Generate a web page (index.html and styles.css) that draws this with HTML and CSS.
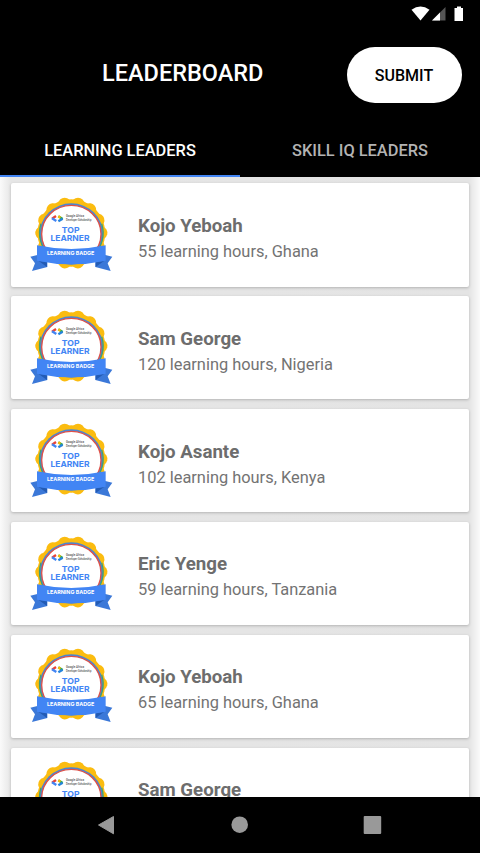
FILE: index.html
```html
<!DOCTYPE html>
<html lang="en">
<head>
<meta charset="utf-8">
<title>Leaderboard</title>
<link rel="stylesheet" href="styles.css">
</head>
<body>
<svg class="defs" aria-hidden="true">
  <symbol id="badge" viewBox="0 0 300 270">
    <g fill="#fbbc10">
      <circle cx="154" cy="129" r="101.500"/>
      <g id="bumps">
        <g id="pair"><circle cx="134" cy="42.500" r="19.500"/><circle cx="174" cy="42.500" r="19.500"/></g>
        <use href="#pair" transform="rotate(51.430 154 129)"/>
        <use href="#pair" transform="rotate(102.860 154 129)"/>
        <use href="#pair" transform="rotate(154.290 154 129)"/>
        <use href="#pair" transform="rotate(205.710 154 129)"/>
        <use href="#pair" transform="rotate(257.140 154 129)"/>
        <use href="#pair" transform="rotate(308.570 154 129)"/>
      </g>
    </g>
    <ellipse cx="154" cy="132" rx="95" ry="92" fill="#4a86d4"/>
    <path d="M63 101A94 92 0 0 0 88 196M245 101A94 92 0 0 1 220 196" fill="none" stroke="#3f9f78" stroke-width="4"/>
    <ellipse cx="154" cy="132" rx="89" ry="86" fill="#fff" stroke="#df5148" stroke-width="4"/>
    <g fill="none" stroke-width="7">
      <path d="M108 78L96 86" stroke="#ea4335"/>
      <path d="M96 85L109 93" stroke="#4285f4"/>
      <path d="M115 79L128 87" stroke="#34a853"/>
      <path d="M128 86L115 94" stroke="#2684dc"/>
      <path d="M115 79L121 83" stroke="#fbbc04"/>
    </g>
    <g class="badge-small"><text x="138" y="81" textLength="54" lengthAdjust="spacingAndGlyphs">Google Africa</text><text x="138" y="93" textLength="76" lengthAdjust="spacingAndGlyphs">Developer Scholarship</text></g>
    <g class="badge-title"><text x="152" y="130" textLength="53" lengthAdjust="spacingAndGlyphs">TOP</text><text x="150" y="153" textLength="117" lengthAdjust="spacingAndGlyphs">LEARNER</text></g>
    <path d="M52 195L31 200L45 220L36 243L82 231V205ZM256 195L277 200L263 220L272 243L226 231V205Z" fill="#3b78d8"/>
    <path d="M81 231V217L55 212ZM227 231V217L253 212Z" fill="#235bb4"/>
    <path d="M51 166Q154 188 257 166V212Q154 234 51 212Z" fill="#4285f4"/>
    <text class="badge-ribbon" x="152" y="195" textLength="142" lengthAdjust="spacingAndGlyphs">LEARNING BADGE</text>
  </symbol>
</svg>
<div class="screen">
  <header class="app-header">
    <div class="status">
      <svg width="54" height="16" viewBox="0 0 54 16">
        <path d="M0.500 3.800Q9.500-2.800 18.500 3.800L9.500 14.500Z" fill="#fff"/>
        <path d="M21 14.500L34.500 1V14.500Z" fill="#555"/>
        <path d="M21 14.500L29 6.500V14.500Z" fill="#fff"/>
        <path d="M43.500 2H46V0.500H50V2H52V15H43.500Z" fill="#fff"/>
      </svg>
    </div>
    <div class="toolbar">
      <h1>LEADERBOARD</h1>
      <button class="submit">SUBMIT</button>
    </div>
    <nav class="tabs">
      <div class="tab active"><span>LEARNING LEADERS</span></div>
      <div class="tab"><span>SKILL IQ LEADERS</span></div>
    </nav>
  </header>
  <main class="list">
    <article class="card"><svg class="badge"><use href="#badge"/></svg><div class="info"><h2>Kojo Yeboah</h2><p>55 learning hours, Ghana</p></div></article>
    <article class="card"><svg class="badge"><use href="#badge"/></svg><div class="info"><h2>Sam George</h2><p>120 learning hours, Nigeria</p></div></article>
    <article class="card"><svg class="badge"><use href="#badge"/></svg><div class="info"><h2>Kojo Asante</h2><p>102 learning hours, Kenya</p></div></article>
    <article class="card"><svg class="badge"><use href="#badge"/></svg><div class="info"><h2>Eric Yenge</h2><p>59 learning hours, Tanzania</p></div></article>
    <article class="card"><svg class="badge"><use href="#badge"/></svg><div class="info"><h2>Kojo Yeboah</h2><p>65 learning hours, Ghana</p></div></article>
    <article class="card"><svg class="badge"><use href="#badge"/></svg><div class="info"><h2>Sam George</h2></div></article>
  </main>
  <footer class="navbar">
    <svg width="480" height="56" viewBox="0 0 480 56" fill="#999">
      <path d="M98.500 28L113.500 19.500V36.800Z" stroke="#999" stroke-linejoin="round"/>
      <circle cx="239.700" cy="27.700" r="8.300"/>
      <rect x="363.700" y="19" width="17.500" height="18" rx="1"/>
    </svg>
  </footer>
</div>
</body>
</html>
```

FILE: styles.css
```css
* { box-sizing: border-box; }
body { margin: 0; font-family: Roboto, sans-serif; }
h1, h2, p { margin: 0; }
.defs { position: absolute; width: 0; height: 0; }
.screen { width: 480px; height: 853px; display: flex; flex-direction: column; overflow: hidden; background: #fff; }
.app-header { flex: 0 0 177.400px; background: #000; color: #fff; }
.status { height: 28px; display: flex; justify-content: flex-end; padding: 6px 15px 0 0; }
.toolbar { height: 93px; display: flex; align-items: center; justify-content: space-between; padding: 0 18.500px 0 102px; }
h1 { font-size: 23.500px; font-weight: 500; line-height: 30px; margin-top: -4px; }
.submit { width: 115px; height: 56px; border: 0; border-radius: 28px; background: #fff; color: #000; font: 500 16px Roboto, sans-serif; padding: 1px 0 0; }
.tabs { display: flex; height: 56px; }
.tab { flex: 1; display: flex; align-items: center; justify-content: center; font-size: 16.400px; font-weight: 500; color: #b3b3b3; border-bottom: 2px solid transparent; padding-top: 4px; }
.tab.active { color: #fff; border-bottom-color: #4285f4; }
.list { flex: 1; min-height: 0; overflow: hidden; display: flex; flex-direction: column; gap: 9.700px; padding: 6px 11px 0 10.500px; background: linear-gradient(90deg, #fafafa 0, #e6e6e6 11px, #e4e4e4 469px, #fafafa 480px); }
.card { flex: 0 0 103.200px; display: flex; background: #fff; border-radius: 2px; box-shadow: 0 1px 3px rgba(0, 0, 0, .22); }
.badge { width: 100px; height: 90px; margin: 6.500px 0 0 9.500px; }
.info { margin: 30.400px 0 0 18px; color: #6d6d6d; }
h2 { font-size: 18.700px; line-height: 25px; font-weight: 700; }
p { font-size: 16.400px; line-height: 26px; color: #737373; }
.badge-title { font: 700 24px Inter, sans-serif; fill: #4285f4; text-anchor: middle; }
.badge-small { font: 500 9px Roboto, sans-serif; fill: #555; }
.badge-ribbon { font: 700 16px Inter, sans-serif; fill: #fff; text-anchor: middle; }
.navbar { flex: 0 0 56px; background: #000; }
.navbar svg { display: block; }
```
